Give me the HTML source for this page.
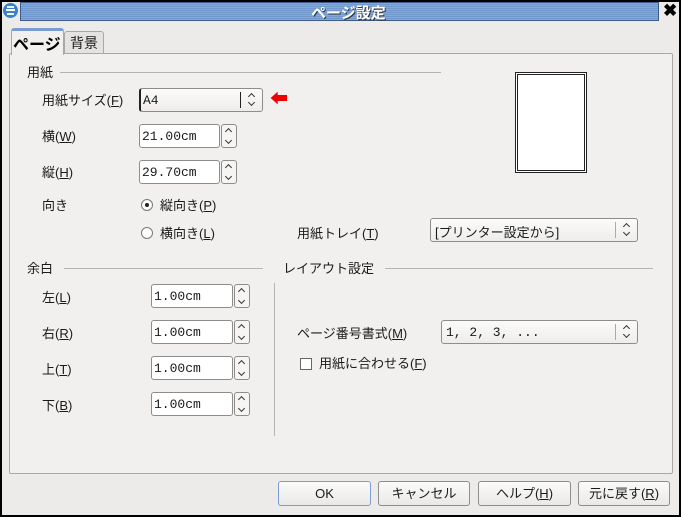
<!DOCTYPE html>
<html><head><meta charset="utf-8"><style>
*{box-sizing:border-box;margin:0;padding:0}
body{width:681px;height:517px;overflow:hidden;background:#000;font-family:"Liberation Sans","Noto Sans CJK JP",sans-serif;font-size:13px;color:#1a1a1a;position:relative}
.win{position:absolute;left:2px;top:2px;width:677px;height:513px;background:#ecebe9}
.a{position:absolute;white-space:nowrap}
.l{margin-top:-2px}
.title{position:absolute;left:20px;top:2px;width:639px;height:19px;border:1px solid #3d5a8a;background:repeating-linear-gradient(#86a8d6 0 1px,#7098cd 1px 2px)}
.title span{position:absolute;left:290px;top:-1px;color:#fff;font-weight:bold;font-size:15px;text-shadow:1px 1px 0 #333}
.panel{position:absolute;left:9px;top:53px;width:664px;height:421px;background:#f1f0ee;border:1px solid #a9a8a6;border-radius:2px}
.tab{position:absolute;background:#e4e3e1;border:1px solid #a9a8a6;border-bottom:none;border-radius:3px 3px 0 0}
.field{position:absolute;background:#fff;border:1px solid #8e8d8b;border-radius:3px;font-family:"Liberation Mono",monospace;font-size:13px;padding:4px 0 0 2px;height:24px}
.spin{position:absolute;width:16px;height:24px;border:1px solid #8e8d8b;border-radius:3px;background:#f6f5f4}
.spin:before{content:"";position:absolute;left:4px;top:4px;width:4px;height:4px;border-left:1.3px solid #333;border-top:1.3px solid #333;transform:rotate(45deg)}
.spin:after{content:"";position:absolute;left:4px;top:13px;width:4px;height:4px;border-right:1.3px solid #333;border-bottom:1.3px solid #333;transform:rotate(45deg)}
.combo{position:absolute;height:24px;border:1px solid #8e8d8b;border-radius:3px;background:linear-gradient(#fbfbfa,#eeedeb);padding:3px 0 0 4px}
.combo .ar{position:absolute;right:0;top:3px;width:22px;height:16px;border-left:1px solid #aaa}
.combo .ar:before{content:"";position:absolute;left:8px;top:2px;width:4px;height:4px;border-left:1.3px solid #333;border-top:1.3px solid #333;transform:rotate(45deg)}
.combo .ar:after{content:"";position:absolute;left:8px;top:8px;width:4px;height:4px;border-right:1.3px solid #333;border-bottom:1.3px solid #333;transform:rotate(45deg)}
.hl{position:absolute;height:1px;background:#b5b4b2}
.btn{position:absolute;top:481px;height:25px;border:1px solid #8e8d8b;border-radius:3px;background:linear-gradient(#fbfbfa,#eae9e7);text-align:center;line-height:23px}
u{text-decoration:underline}
</style></head><body>
<div class="win"></div>
<div class="a" style="left:3px;top:3px;width:15px;height:15px;border-radius:50%;background:#3f7fc8"><div style="position:absolute;left:3px;top:6px;width:9px;height:2px;background:#fff"></div><div style="position:absolute;left:4px;top:3px;width:7px;height:1.5px;background:#dfe"></div><div style="position:absolute;left:4px;top:10px;width:7px;height:1.5px;background:#dfe"></div></div>
<div class="title"><span>ページ設定</span></div>
<div class="a" style="left:663px;top:1px;font-size:17px;font-weight:bold;color:#000">✖</div>
<div class="panel"></div>
<div class="tab" style="left:64px;top:31px;width:40px;height:22px"><span class="a" style="left:5px;top:1px;font-size:14px">背景</span></div>
<div class="tab" style="left:11px;top:28px;width:53px;height:27px;background:#f1f0ee;border-top:3px solid #7a9cd0"><span class="a" style="left:1px;top:0px;font-size:16px;font-weight:bold;color:#000">ページ</span></div>

<div class="a l" style="left:27px;top:64px">用紙</div><div class="hl" style="left:60px;top:72px;width:381px"></div>
<div class="a l" style="left:42px;top:92px">用紙サイズ(<u>F</u>)</div>
<div class="combo" style="left:139px;top:88px;width:124px;font-family:'Liberation Mono',monospace;font-size:13px;padding:4px 0 0 2px;border-left:2px solid #222">A4<div class="ar" style="border-left:1px solid #222"></div></div>
<div class="a" style="left:270px;top:92px;color:#e00;font-size:18px;line-height:14px">⬅</div>
<div class="a l" style="left:42px;top:128px">横(<u>W</u>)</div>
<div class="field" style="left:139px;top:124px;width:81px">21.00cm</div><div class="spin" style="left:221px;top:124px"></div>
<div class="a l" style="left:42px;top:164px">縦(<u>H</u>)</div>
<div class="field" style="left:139px;top:160px;width:81px">29.70cm</div><div class="spin" style="left:221px;top:160px"></div>
<div class="a l" style="left:42px;top:197px">向き</div>
<div class="a" style="left:141px;top:199px;width:12px;height:12px;border:1px solid #777;border-radius:50%;background:#fff"><div style="position:absolute;left:3px;top:3px;width:4px;height:4px;border-radius:50%;background:#222"></div></div>
<div class="a l" style="left:160px;top:197px">縦向き(<u>P</u>)</div>
<div class="a" style="left:141px;top:227px;width:12px;height:12px;border:1px solid #777;border-radius:50%;background:#fff"></div>
<div class="a l" style="left:160px;top:225px">横向き(<u>L</u>)</div>
<div class="a l" style="left:297px;top:225px">用紙トレイ(<u>T</u>)</div>
<div class="combo" style="left:430px;top:218px;width:208px">[プリンター設定から]<div class="ar"></div></div>
<div class="a" style="left:515px;top:72px;width:72px;height:101px;border:1px solid #222;background:#fff"><div style="position:absolute;left:1px;top:1px;right:1px;bottom:1px;border:1px solid #222"></div></div>

<div class="a l" style="left:27px;top:260px">余白</div><div class="hl" style="left:64px;top:268px;width:199px"></div>
<div class="a l" style="left:283px;top:260px">レイアウト設定</div><div class="hl" style="left:385px;top:268px;width:268px"></div>
<div class="a" style="left:274px;top:283px;width:1px;height:153px;background:#b5b4b2"></div>
<div class="a l" style="left:42px;top:289px">左(<u>L</u>)</div>
<div class="field" style="left:151px;top:284px;width:82px">1.00cm</div><div class="spin" style="left:234px;top:284px"></div>
<div class="a l" style="left:42px;top:325px">右(<u>R</u>)</div>
<div class="field" style="left:151px;top:320px;width:82px">1.00cm</div><div class="spin" style="left:234px;top:320px"></div>
<div class="a l" style="left:42px;top:361px">上(<u>T</u>)</div>
<div class="field" style="left:151px;top:356px;width:82px">1.00cm</div><div class="spin" style="left:234px;top:356px"></div>
<div class="a l" style="left:42px;top:397px">下(<u>B</u>)</div>
<div class="field" style="left:151px;top:392px;width:82px">1.00cm</div><div class="spin" style="left:234px;top:392px"></div>
<div class="a l" style="left:297px;top:325px">ページ番号書式(<u>M</u>)</div>
<div class="combo" style="left:441px;top:320px;width:197px;font-family:'Liberation Mono',monospace;padding-top:4px">1, 2, 3, ...<div class="ar"></div></div>
<div class="a" style="left:300px;top:358px;width:12px;height:12px;border:1px solid #666;background:#fff"></div>
<div class="a l" style="left:319px;top:355px">用紙に合わせる(<u>F</u>)</div>

<div class="btn" style="left:278px;width:93px;border-color:#7a9cd0">OK</div>
<div class="btn" style="left:378px;width:92px">キャンセル</div>
<div class="btn" style="left:478px;width:93px">ヘルプ(<u>H</u>)</div>
<div class="btn" style="left:578px;width:92px">元に戻す(<u>R</u>)</div>
</body></html>
